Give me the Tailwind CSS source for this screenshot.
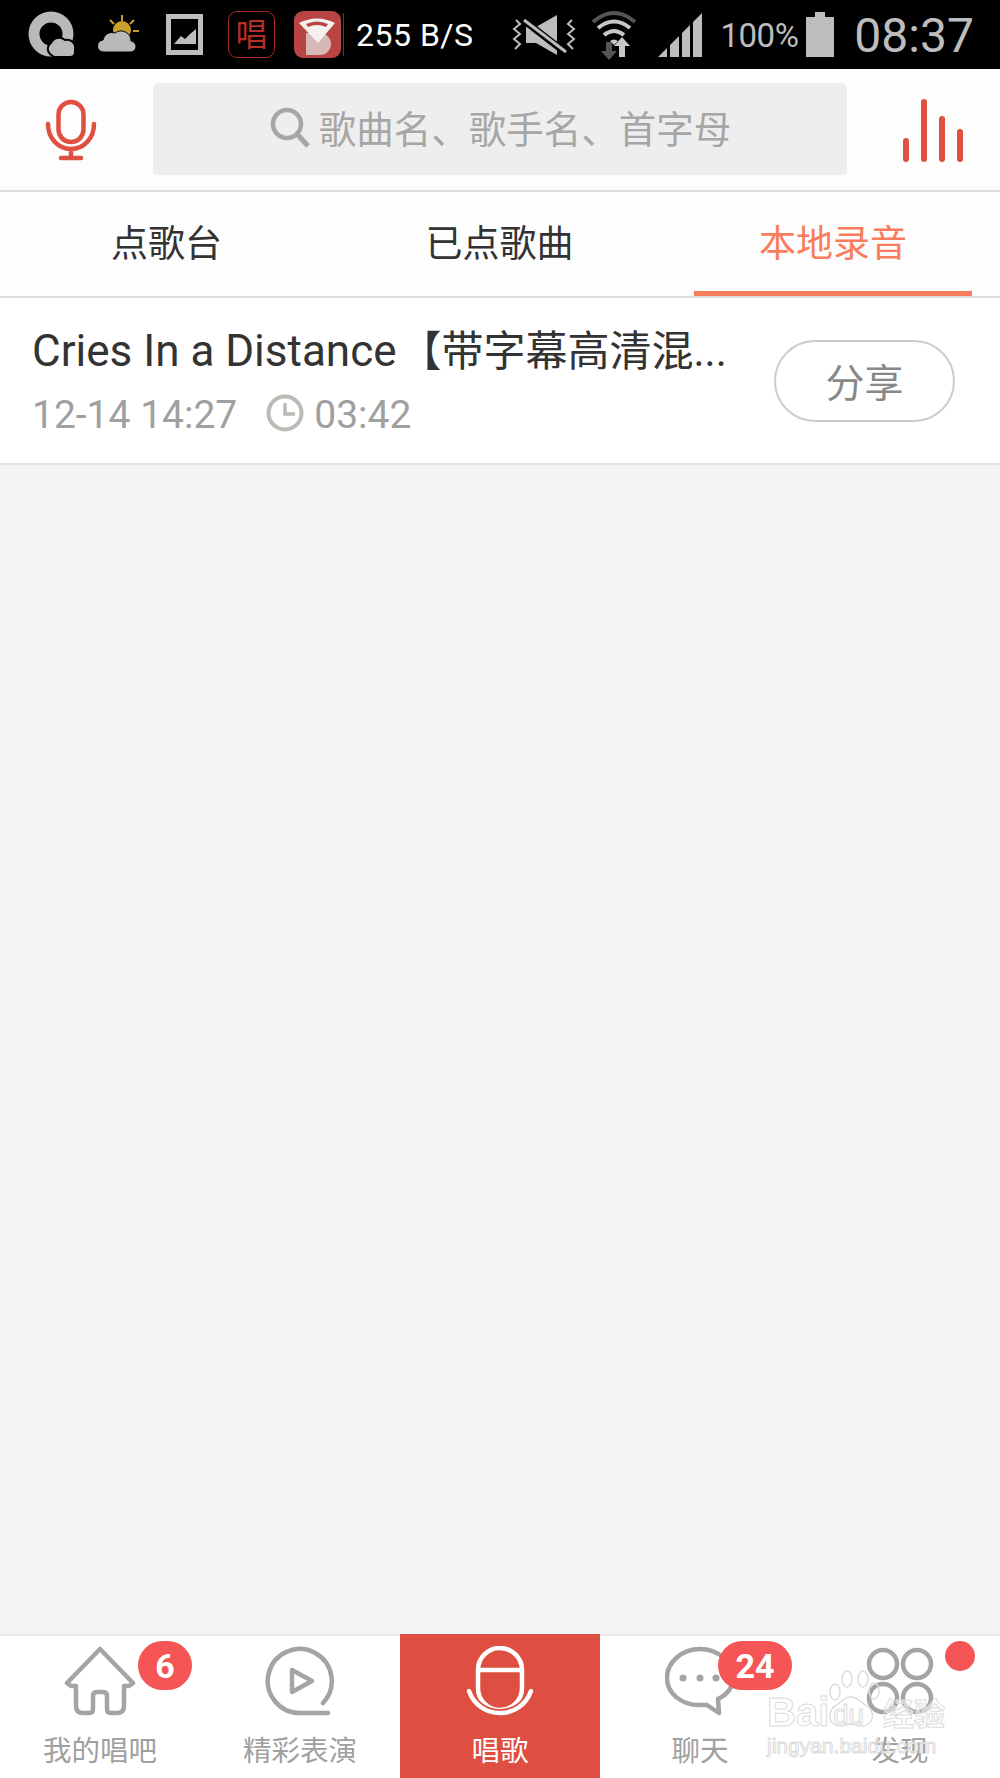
<!DOCTYPE html>
<html lang="zh-CN">
  <head>
    <meta charset="UTF-8" />
    <meta name="viewport" content="width=device-width, initial-scale=1.0" />
    <title>本地录音</title>
    <script src="https://cdn.jsdelivr.net/npm/@tailwindcss/browser@4"></script>
  </head>
  <body class="bg-[#f4f4f4] font-[Roboto,'Noto_Sans_CJK_SC',sans-serif]">
    <div class="relative flex flex-col w-[1000px] h-[1778px] overflow-hidden">
      <!-- status bar -->
      <div class="flex items-center h-[69px] shrink-0 bg-black pl-[28px]">
        <svg class="w-[47px] h-[47px] shrink-0" viewBox="0 0 47 47">
          <circle cx="23" cy="23" r="17" fill="none" stroke="#b9b9b9" stroke-width="11" />
          <path d="M22 43a7 7 0 0 1 1-11 9 9 0 0 1 14-3 8 8 0 0 1 10 9v3a5 5 0 0 1-5 5H26z" fill="#b9b9b9" stroke="#000" stroke-width="2" />
        </svg>
        <svg class="ml-[23px] w-[42px] h-[42px] shrink-0" viewBox="0 0 42 42">
          <path d="M24 1v6M12 6l4 4M36 6l-4 4M35 17h6" stroke="#c8a030" stroke-width="2" />
          <circle cx="24" cy="16" r="9" fill="#c8a030" />
          <path d="M6 38a6 6 0 0 1-1-12 9 9 0 0 1 12-7 10 10 0 0 1 16 8 5.500 5.500 0 0 1-1 11z" fill="#b9b9b9" stroke="#000" stroke-width="1" />
        </svg>
        <svg class="ml-[26px] w-[37px] h-[41px] shrink-0" viewBox="0 0 37 41">
          <rect x="2.500" y="2.500" width="32" height="36" fill="none" stroke="#bdbdbd" stroke-width="5" />
          <path d="M8 30l7-8 4 3 5-5 6-5v15z" fill="#bdbdbd" />
        </svg>
        <div class="ml-[25px] flex items-center justify-center w-[47px] h-[47px] shrink-0 rounded-[9px] border border-[#a82a22] text-[#b72e25] text-[32px] leading-none">唱</div>
        <svg class="ml-[19px] w-[47px] h-[47px] shrink-0" viewBox="0 0 47 47">
          <rect width="47" height="47" rx="9" fill="#b84543" />
          <path d="M12 22h14a11 11 0 0 1 0 22H12z" fill="#d8b8b6" />
          <path d="M24 32L5 12q18-9 36 0z" fill="#f4f0ee" />
          <path d="M12 13q11-5 22 0l-2 3q-9-4-18 0z" fill="#b84543" />
        </svg>
        <div class="ml-[2px] w-px h-[43px] bg-[#444] shrink-0"></div>
        <span class="ml-[12px] text-[32px] leading-none tracking-[0.5px] text-white whitespace-nowrap">255 B/S</span>
        <svg class="ml-[37px] w-[66px] h-[42px] shrink-0" viewBox="0 0 66 42">
          <path d="M15 13h10L46 1v40L25 29H15z" fill="#bdbdbd" />
          <path d="M11 5l44 34" stroke="#000" stroke-width="7" />
          <path d="M13 6l42 32" stroke="#bdbdbd" stroke-width="3" />
          <path d="M5 6l4 4-6 5 6 5-6 5 6 5-5 5M61 6l-4 4 6 5-6 5 6 5-6 5 5 5" fill="none" stroke="#bdbdbd" stroke-width="2" />
        </svg>
        <svg class="ml-[14px] w-[46px] h-[50px] shrink-0" viewBox="0 0 46 50">
          <path d="M2 12q21-18 42 0" fill="none" stroke="#555" stroke-width="4" />
          <path d="M7 18q16-13 32 0M13 25q10-8 20 0" fill="none" stroke="#c8c8c8" stroke-width="4" />
          <path d="M19 31q4-3 8 0l-4 4z" fill="#c8c8c8" />
          <path d="M15 32h6v9h5l-8 9-8-9h5z" fill="#555" />
          <path d="M31 27l8 9h-5v11h-6V36h-5z" fill="#c8c8c8" />
        </svg>
        <svg class="ml-[21px] w-[45px] h-[46px] shrink-0" viewBox="0 0 45 46">
          <path d="M0 45l9-9v9zM12 45V33l9-9v21zM24 45V21l8-8v32zM35 45V10l9-9v44z" fill="#bdbdbd" />
        </svg>
        <span class="ml-[18px] pt-[2px] text-[33px] leading-none tracking-[-0.5px] text-[#bdbdbd] whitespace-nowrap">100%</span>
        <svg class="ml-[8px] w-[28px] h-[45px] shrink-0" viewBox="0 0 28 45">
          <path d="M9 0h10v5h9v40H0V5h9z" fill="#bdbdbd" />
        </svg>
        <span class="ml-[20px] pt-[3px] text-[48px] leading-none text-[#bdbdbd] whitespace-nowrap">08:37</span>
      </div>

      <!-- search header -->
      <div class="flex items-center h-[123px] shrink-0 bg-[#fdfdfd] border-b-2 border-[#dedede]">
        <div class="flex justify-center w-[153px] shrink-0 pr-[12px]">
          <svg class="w-[52px] h-[62px]" viewBox="0 0 52 62" fill="none" stroke="#e05040" stroke-width="4.500" stroke-linecap="round">
            <rect x="13.500" y="3" width="25" height="40" rx="12.500" />
            <path d="M3 25c0 14 10 25 23 25s23-11 23-25M26 50v9M16 59h20" />
          </svg>
        </div>
        <div class="flex items-center justify-center w-[694px] h-[92px] mb-[1px] shrink-0 rounded-[5px] bg-[#eeeeee] text-[37.5px] leading-none text-[#a6a6a6]">
          <svg class="w-[42px] h-[42px] mr-[8px] mb-[2px] shrink-0" viewBox="0 0 42 42" fill="none" stroke="#a6a6a6">
            <circle cx="18" cy="17" r="14" stroke-width="4.500" />
            <path d="M29 28l10 11" stroke-width="5" />
          </svg>
          <span class="pt-[3px]">歌曲名、歌手名、首字母</span>
        </div>
        <div class="flex items-end flex-1 gap-[12px] h-[64px] pl-[56px]">
          <div class="w-[6px] h-[24px] rounded-sm bg-[#e05040]"></div>
          <div class="w-[6px] h-[63px] rounded-sm bg-[#e05040]"></div>
          <div class="w-[6px] h-[46px] rounded-sm bg-[#e05040]"></div>
          <div class="w-[6px] h-[33px] rounded-sm bg-[#e05040]"></div>
        </div>
      </div>

      <!-- tabs -->
      <div class="grid grid-cols-[333px_333px_334px] h-[106px] shrink-0 bg-[#fdfdfd] border-b-2 border-[#dedede] text-[37px] leading-none text-[#333]">
        <div class="flex items-center justify-center">点歌台</div>
        <div class="flex items-center justify-center">已点歌曲</div>
        <div class="relative flex items-center justify-center text-[#f97c5c]">
          本地录音
          <div class="absolute left-[28px] bottom-0 w-[278px] h-[5px] bg-[#f97c5c]"></div>
        </div>
      </div>

      <!-- recording row -->
      <div class="flex items-center h-[167px] shrink-0 bg-white border-b-2 border-[#e2e2e2] pl-[32px]">
        <div class="w-[696px] shrink-0 pt-[3px]">
          <div class="whitespace-nowrap text-[42px] leading-[48px] text-[#333]"><span class="text-[44px] mr-[3px]">Cries In a Distance</span>【带字幕高清混...</div>
          <div class="flex items-center mt-[16px] text-[39px] leading-[46px] text-[#a0a0a0]">
            <span>12-14 14:27</span>
            <svg class="ml-[29px] mr-[10px] mb-[4px] w-[38px] h-[38px]" viewBox="0 0 38 38" fill="none" stroke="#bdb9b4">
              <circle cx="19" cy="19" r="16.500" stroke-width="4" />
              <path d="M19 9v11h10" stroke-width="3.500" />
            </svg>
            <span>03:42</span>
          </div>
        </div>
        <div class="ml-[46px] flex items-center justify-center w-[181px] h-[82px] pt-[7px] rounded-full border-2 border-[#cccccc] text-[39px] leading-none text-[#888]">分享</div>
      </div>

      <div class="flex-1"></div>

      <!-- bottom nav -->
      <div class="relative grid grid-cols-5 h-[144px] shrink-0 bg-white border-t-2 border-[#e8e8e8] text-[28.500px] leading-none text-[#a0a0a0]">
        <div class="relative flex flex-col items-center pt-[10px]">
          <svg class="w-[72px] h-[70px]" viewBox="0 0 72 70" fill="none" stroke="#a4a4a4" stroke-width="4.500" stroke-linejoin="round">
            <path d="M36 3L3 37l4 3h5v20q0 7 7 7h6q4 0 4-4V50q0-4 4-4h6q4 0 4 4v13q0 4 4 4h6q7 0 7-7V40h5l4-3z" />
          </svg>
          <span class="mt-[22px]">我的唱吧</span>
          <div class="absolute left-[138px] top-[5px] flex items-center justify-center w-[54px] h-[49px] rounded-full bg-[#f65556] text-[34px] font-bold text-white">6</div>
        </div>
        <div class="flex flex-col items-center pt-[10px]">
          <svg class="w-[70px] h-[70px]" viewBox="0 0 70 70" fill="none" stroke="#a4a4a4" stroke-linecap="round" stroke-linejoin="round">
            <path d="M35 67a32 32 0 1 1 23-10" stroke-width="4.500" />
            <path d="M35 67h28" stroke-width="4.500" />
            <path d="M27 24l20 11-20 11z" stroke-width="4.500" />
          </svg>
          <span class="mt-[22px]">精彩表演</span>
        </div>
        <div class="relative flex flex-col items-center pt-[10px] text-white">
          <div class="absolute inset-x-0 top-[-2px] bottom-0 bg-[#de4f41]"></div>
          <svg class="relative w-[70px] h-[70px]" viewBox="0 0 70 70" fill="none" stroke="#ffffff" stroke-width="4.500" stroke-linecap="round">
            <rect x="13" y="2" width="44" height="62" rx="22" />
            <path d="M13 24h44" />
            <path d="M4 45c5 14 17 22 31 22s26-8 31-22" stroke="#de4f41" stroke-width="8" />
            <path d="M4 45c5 14 17 22 31 22s26-8 31-22" />
          </svg>
          <span class="relative mt-[22px]">唱歌</span>
        </div>
        <div class="relative flex flex-col items-center pt-[10px]">
          <svg class="w-[72px] h-[70px] ml-[2px]" viewBox="0 0 72 70" fill="none" stroke="#a4a4a4" stroke-width="4.500" stroke-linejoin="round">
            <path d="M35 3C17 3 2 16 2 32c0 15 14 27 32 27 3 0 6 0 8 0l12 8-1-14c10-5 15-13 15-21C68 16 53 3 35 3z" />
            <circle cx="18" cy="32" r="3.500" fill="#a4a4a4" stroke="none" />
            <circle cx="35" cy="32" r="3.500" fill="#a4a4a4" stroke="none" />
            <circle cx="51" cy="32" r="3.500" fill="#a4a4a4" stroke="none" />
          </svg>
          <span class="mt-[22px]">聊天</span>
          <div class="absolute left-[118px] top-[5px] flex items-center justify-center w-[74px] h-[49px] rounded-full bg-[#f65556] text-[34px] font-bold text-white">24</div>
        </div>
        <div class="relative flex flex-col items-center pt-[10px]">
          <svg class="w-[68px] h-[70px]" viewBox="0 0 68 70" fill="none" stroke="#a4a4a4" stroke-width="4.500">
            <circle cx="17" cy="18" r="14" />
            <circle cx="51" cy="18" r="14" />
            <circle cx="17" cy="52" r="14" />
            <circle cx="51" cy="52" r="14" />
          </svg>
          <span class="mt-[22px]">发现</span>
          <div class="absolute left-[145px] top-[5px] w-[30px] h-[30px] rounded-full bg-[#f65556]"></div>
        </div>
      </div>

      <!-- watermark -->
      <div class="absolute left-[767px] top-[1670px] w-[180px] h-[100px] text-white/50 [-webkit-text-stroke:1px_#dcdcdc]">
        <svg class="absolute left-[62px] top-0 w-[60px] h-[60px]" viewBox="0 0 60 60" fill="none" stroke="#dcdcdc" stroke-width="1.500">
          <ellipse cx="6" cy="22" rx="5" ry="8" />
          <ellipse cx="18" cy="9" rx="5" ry="8" />
          <ellipse cx="34" cy="9" rx="5" ry="8" />
          <ellipse cx="45" cy="21" rx="5" ry="8" />
          <path d="M22 27c8 0 10 6 16 9 8 4 8 20-6 20-4 0-6-2-10-2s-7 2-11 2C-2 56-1 40 6 36c6-3 8-9 16-9z" />
        </svg>
        <span class="absolute left-0 top-[22px] text-[40px] leading-none font-bold font-['Liberation_Sans',sans-serif]">Bai</span>
        <span class="absolute left-[66px] top-[31px] text-[28px] leading-none font-['Liberation_Sans',sans-serif]">du</span>
        <span class="absolute left-[116px] top-[29px] text-[31px] leading-none font-bold">经验</span>
        <span class="absolute left-0 top-[65px] text-[21px] leading-none font-['Liberation_Sans',sans-serif]">jingyan.baidu.com</span>
      </div>
    </div>
  </body>
</html>
